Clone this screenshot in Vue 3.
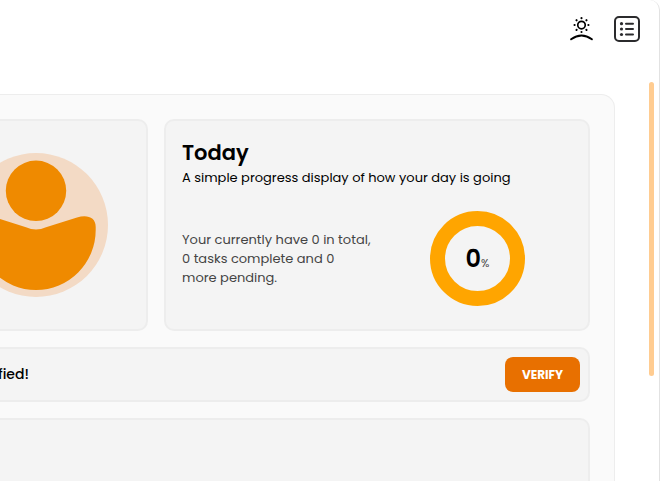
<script setup>
import { ref, computed } from 'vue'

const total = ref(0)
const complete = ref(0)
const pending = computed(() => total.value - complete.value)
const percent = computed(() =>
  total.value ? Math.round((complete.value / total.value) * 100) : 0
)
</script>

<template>
  <div class="window">
    <header class="toolbar">
      <button class="icon-button" type="button" aria-label="Day view">
        <svg class="icon-day" viewBox="0 0 24 24" fill="none" stroke="#000" stroke-linecap="round">
          <circle cx="12" cy="8.7" r="3.6" stroke-width="1.6" />
          <path d="M12 2v.1M12 15.3v.1M5.3 8.7h.1M18.6 8.7h.1M7.2 4l.1.1M16.7 4.1l.1-.1M7.2 13.4l.1-.1M16.7 13.3l.1.1" stroke-width="2" />
          <path d="M2 22.4Q12 14.9 22 22.4" stroke-width="1.8" />
        </svg>
      </button>
      <button class="icon-button" type="button" aria-label="Task list">
        <svg class="icon-list" viewBox="0 0 26 26" fill="none" stroke="#2b2b2d" stroke-width="2" stroke-linecap="round">
          <rect x="1" y="1" width="24" height="24" rx="4" />
          <path d="M12 7.7h7M12 13h7M12 18.5h7" />
          <g fill="#2b2b2d" stroke="none">
            <circle cx="7.5" cy="7.7" r="1.6" />
            <circle cx="7.5" cy="13" r="1.6" />
            <circle cx="7.5" cy="18.5" r="1.6" />
          </g>
        </svg>
      </button>
    </header>

    <main class="panel">
      <div class="row">
        <section class="card profile">
          <svg class="avatar" viewBox="0 0 144 144" role="img" aria-label="Profile picture">
            <circle cx="72" cy="72" r="72" fill="#f3dac5" />
            <g fill="#ef8a00">
              <circle cx="72" cy="37.8" r="30.2" />
              <path d="M82 74.2L113 64.5C123 61.5 131.7 64 131.7 74V77A59.7 60 0 0 1 12.3 77V74C12.3 64 21 61.5 31 64.5L62 74.2Q72 78.6 82 74.2Z" />
            </g>
          </svg>
        </section>

        <section class="card today">
          <h2>Today</h2>
          <p class="subtitle">A simple progress display of how your day is going</p>
          <div class="progress">
            <p class="summary">
              Your currently have {{ total }} in total,<br />
              {{ complete }} tasks complete and {{ pending }}<br />
              more pending.
            </p>
            <div class="ring">
              <span class="value">{{ percent }}</span><span class="unit">%</span>
            </div>
          </div>
        </section>
      </div>

      <section class="card notice">
        <p>fied!</p>
        <button class="verify" type="button">VERIFY</button>
      </section>

      <section class="card tasks"></section>
    </main>
    <div class="scroll-thumb"></div>
  </div>
</template>

<style>
body {
  overflow: hidden;
  background: #fff;
}
</style>

<style scoped>
* {
  box-sizing: border-box;
}
.window {
  position: relative;
  display: flex;
  flex-direction: column;
  height: 100vh;
  padding-right: 44px;
  overflow: hidden;
  border-right: 1px solid #e2e2e2;
  border-top-right-radius: 10px;
  font-family: Poppins, Inter, "Open Sans", sans-serif;
  color: #000;
}
h2,
p {
  margin: 0;
}
.toolbar {
  display: flex;
  flex: none;
  justify-content: flex-end;
  gap: 20px;
  height: 94px;
  margin-right: -25px;
  padding-top: 16px;
}
.icon-button {
  display: flex;
  align-items: flex-start;
  height: 26px;
  padding: 0;
  border: 0;
  background: none;
}
.icon-day {
  width: 25px;
  height: 25px;
}
.icon-list {
  width: 26px;
  height: 26px;
}
.panel {
  display: flex;
  flex: 1;
  flex-direction: column;
  gap: 16px;
  min-height: 0;
  margin-left: -101px;
  padding: 24px 24px 0;
  border: 1px solid #ededed;
  border-bottom: 0;
  border-top-right-radius: 14px;
  background: #fafafa;
}
.row {
  display: grid;
  flex: none;
  grid-template-columns: 224px 1fr;
  gap: 16px;
}
.card {
  border: 2px solid #ededed;
  border-radius: 10px;
  background: #f4f4f4;
}
.profile {
  display: grid;
  height: 212px;
  place-items: center;
}
.avatar {
  width: 144px;
  height: 144px;
}
.today {
  padding: 20px 16px 0;
}
.today h2 {
  font-size: 21px;
  font-weight: 600;
  line-height: 24px;
}
.subtitle {
  font-size: 13px;
  line-height: 26px;
  white-space: nowrap;
}
.progress {
  display: grid;
  grid-template-columns: 1fr 1fr;
  gap: 12px;
  align-items: center;
  margin-top: 20px;
}
.summary {
  color: #444;
  font-size: 13px;
  line-height: 19px;
  white-space: nowrap;
}
.ring {
  display: flex;
  align-items: baseline;
  justify-content: center;
  justify-self: center;
  width: 95px;
  height: 95px;
  border: 15px solid #ffa500;
  border-radius: 50%;
  line-height: 65px;
}
.value {
  font-size: 24px;
  font-weight: 600;
}
.unit {
  color: #444;
  font-size: 11px;
}
.notice {
  display: flex;
  flex: none;
  align-items: center;
  justify-content: space-between;
  height: 55px;
  padding: 0 8px 0 72px;
}
.notice p {
  font-size: 14px;
  font-weight: 500;
}
.verify {
  width: 75px;
  height: 35px;
  padding: 0;
  border: 0;
  border-radius: 8px;
  background: #e87000;
  color: #fff;
  font-family: inherit;
  font-size: 12px;
  font-weight: 700;
}
.tasks {
  flex: 1;
  border-bottom: 0;
  border-bottom-left-radius: 0;
  border-bottom-right-radius: 0;
}
.scroll-thumb {
  position: absolute;
  top: 82px;
  right: 5px;
  width: 5px;
  height: 294px;
  border-radius: 3px;
  background: #ffcc91;
}
</style>
